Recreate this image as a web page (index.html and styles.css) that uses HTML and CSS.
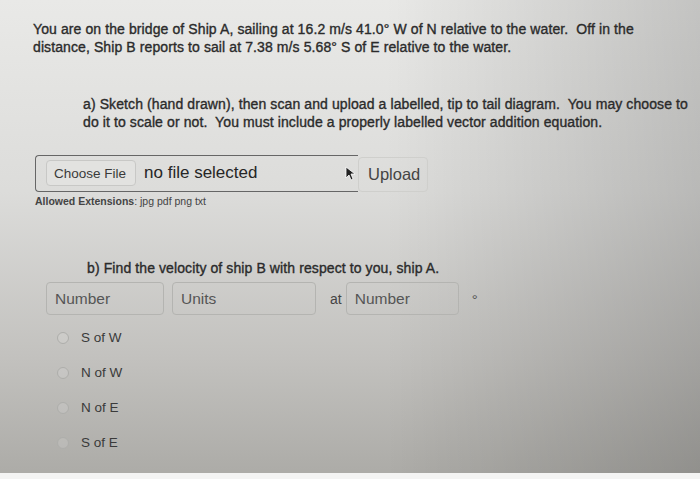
FILE: index.html
```html
<!DOCTYPE html>
<html lang="en">
<head>
    <meta charset="UTF-8">
    <title>Relative velocity</title>
    <link rel="stylesheet" href="styles.css">
</head>
<body>
    <div class="page">
        <p class="intro">You are on the bridge of Ship A, sailing at 16.2 m/s 41.0&deg; W of N relative to the water.&nbsp; Off in the distance, Ship B reports to sail at 7.38 m/s 5.68&deg; S of E relative to the water.</p>

        <p class="part-a">a) Sketch (hand drawn), then scan and upload a labelled, tip to tail diagram.&nbsp; You may choose to do it to scale or not.&nbsp; You must include a properly labelled vector addition equation.</p>

        <div class="upload-row">
            <div class="file-box">
                <span class="choose-btn">Choose File</span>
                <span class="no-file">no file selected</span>
                <svg class="cursor" width="11" height="15" viewBox="0 0 11 15">
                    <path d="M1 1 L1 12 L4 9 L6 14 L8 13 L6 8 L10 8 Z" fill="#222" stroke="#fff" stroke-width="0.8"/>
                </svg>
            </div>
            <span class="upload-btn">Upload</span>
        </div>
        <div class="allowed"><b>Allowed Extensions</b>: jpg pdf png txt</div>

        <p class="part-b">b) Find the velocity of ship B with respect to you, ship A.</p>

        <div class="answer-row">
            <div class="field f-num">Number</div>
            <div class="field f-units">Units</div>
            <span class="at">at</span>
            <div class="field f-angle">Number</div>
            <span class="deg">&deg;</span>
        </div>

        <ul class="choices">
            <li><span class="radio"></span>S of W</li>
            <li><span class="radio"></span>N of W</li>
            <li><span class="radio"></span>N of E</li>
            <li><span class="radio"></span>S of E</li>
        </ul>
    </div>
    <div class="bottom-strip"></div>
</body>
</html>
```

FILE: styles.css
```css
html, body {
    margin: 0;
    height: 100%;
}
body {
    font-family: "Liberation Sans", Arial, sans-serif;
    color: #2b2b2b;
    width: 700px;
    height: 479px;
    overflow: hidden;
    background:
        linear-gradient(90deg, rgba(0,0,0,0) 55%, rgba(0,0,0,0.16) 100%),
        linear-gradient(180deg, #e9e9e7 0%, #dcdcda 40%, #c2c1be 75%, #adaca8 98%);
    display: flex;
    flex-direction: column;
}
.page {
    flex: 1;
    padding: 20px 0 0 33px;
}
p {
    margin: 0;
    font-size: 14px;
    line-height: 18px;
    letter-spacing: 0.1px;
    -webkit-text-stroke: 0.35px #2b2b2b;
}
.intro {
    width: 632px;
}
.part-a {
    margin: 39px 0 0 50px;
    width: 616px;
}
.upload-row {
    display: flex;
    align-items: center;
    margin: 23px 0 0 2px;
}
.file-box {
    width: 323px;
    height: 37px;
    border: 1.5px solid #666;
    border-right: none;
    border-radius: 4px 0 0 4px;
    display: flex;
    align-items: center;
    padding-left: 10px;
    box-sizing: border-box;
    position: relative;
}
.choose-btn {
    font-size: 13.5px;
    color: #3a3a3a;
    background: #e2e2e0;
    border: 1px solid #c8c8c6;
    border-radius: 4px;
    padding: 5px 9px 4px 7px;
}
.no-file {
    font-size: 17px;
    margin-left: 8px;
    color: #262626;
}
.cursor {
    position: absolute;
    right: 2px;
    top: 10px;
}
.upload-btn {
    font-size: 16.5px;
    color: #444;
    border: 1px solid #cfcfcc;
    border-radius: 4px;
    padding: 7px 7px 7px 9px;
    margin-top: 3px;
}
.allowed {
    font-size: 10.5px;
    color: #444;
    margin: 3px 0 0 2px;
}
.part-b {
    margin: 52px 0 0 54px;
}
.answer-row {
    display: flex;
    align-items: center;
    margin: 5px 0 0 13px;
}
.field {
    height: 33px;
    box-sizing: border-box;
    border: 1.5px solid #b4b4b1;
    border-radius: 4px;
    font-size: 15.5px;
    color: #555;
    display: flex;
    align-items: center;
    padding-left: 8px;
}
.f-num { width: 118px; }
.f-units { width: 144px; margin-left: 8px; }
.at {
    font-size: 14px;
    color: #444;
    margin: 0 4px 0 14px;
}
.f-angle { width: 113px; }
.deg {
    font-size: 15px;
    color: #555;
    margin: 2px 0 0 13px;
}
.choices {
    list-style: none;
    margin: 5px 0 0 24px;
    padding: 0;
}
.choices li {
    display: flex;
    align-items: center;
    height: 35px;
    font-size: 13.5px;
    color: #3a3a3a;
}
.radio {
    width: 10px;
    height: 10px;
    border: 1px solid #aeaeab;
    border-radius: 50%;
    margin-right: 12px;
    background: rgba(255,255,255,0.12);
}
.bottom-strip {
    height: 6px;
    background: #f4f4f3;
}
```
